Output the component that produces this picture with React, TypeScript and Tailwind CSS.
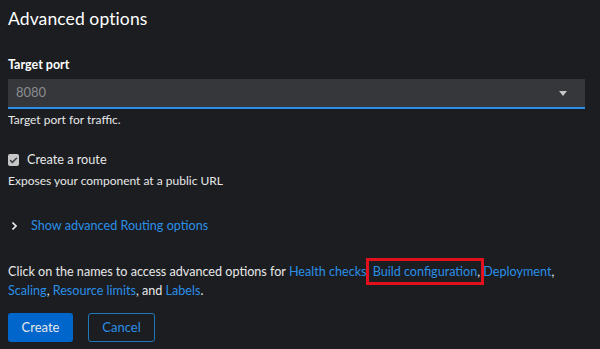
import { Check } from "lucide-react";

const font = { fontFamily: 'Lato, "Liberation Sans", sans-serif' };

function Link({ children }: { children: React.ReactNode }) {
  return <span className="text-[#2b8fe6]">{children}</span>;
}

export default function App() {
  return (
    <div className="w-[600px] h-[349px] overflow-hidden bg-[#1b1d21] text-[#e8e8e8] px-2" style={font}>
      <h1 className="text-[17.5px] leading-[24px] pt-[7px] text-white tracking-[0.1px]">Advanced options</h1>

      <div className="mt-[26px] text-[12.5px] font-bold leading-[16px] text-white">Target port</div>

      <div className="mt-[6px] w-[577px] h-[30px] bg-[#36373b] border-b-2 border-[#2b8fe6] flex items-center justify-between pl-2 pr-[18px]">
        <span className="text-[13px] text-[#8a8d90]">8080</span>
        <svg width="8" height="5" viewBox="0 0 8 5">
          <path d="M0 0 H8 L4 5 Z" fill="#c7c7c7" />
        </svg>
      </div>

      <div className="mt-[2px] text-[12px] leading-[18px]">Target port for traffic.</div>

      <div className="mt-[22px] flex items-center gap-2 h-[18px]">
        <span className="w-[11px] h-[12px] rounded-[2px] bg-[#c7c7c7] flex items-center justify-center">
          <Check className="w-[9px] h-[9px] text-[#3c3f42]" strokeWidth={4} />
        </span>
        <span className="text-[12.7px]">Create a route</span>
      </div>
      <div className="mt-[3px] text-[12px] leading-[18px]">Exposes your component at a public URL</div>

      <div className="mt-[27px] flex items-center h-[18px]">
        <svg width="5" height="8" viewBox="0 0 5 8" className="ml-[4px]">
          <path d="M0.5 0.5 L4 4 L0.5 7.5" stroke="#e8e8e8" strokeWidth="1.6" fill="none" />
        </svg>
        <span className="ml-[14px] text-[12.6px] text-[#2b8fe6]">Show advanced Routing options</span>
      </div>

      <p className="mt-[27px] text-[12.6px] leading-[19px] w-[580px]">
        Click on the names to access advanced options for <Link>Health checks</Link>,{" "}
        <span className="relative">
          <Link>Build configuration</Link>,
          <span className="absolute -left-[7px] -right-[4px] -top-[6px] -bottom-[6px] border-[3px] border-[#e3111e]" />
        </span>{" "}
        <Link>Deployment</Link>, <Link>Scaling</Link>, <Link>Resource limits</Link>, and <Link>Labels</Link>.
      </p>

      <div className="mt-[13px] flex gap-[15px]">
        <button className="w-[65px] h-[29px] rounded-[3px] bg-[#0066cc] text-[13px] text-[#e8e8e8]">Create</button>
        <button className="w-[67px] h-[29px] rounded-[3px] border border-[#1f78b8] text-[13px] text-[#2b8fe6]">Cancel</button>
      </div>
    </div>
  );
}
